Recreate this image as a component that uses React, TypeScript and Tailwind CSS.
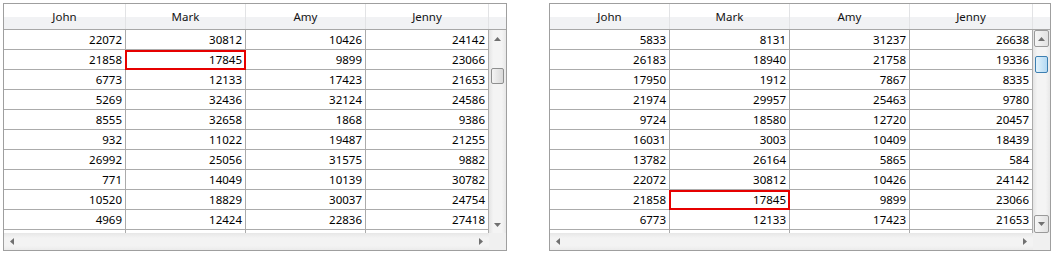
import React from 'react';

type Mark = { row: number; col: number };

const cols = ['John', 'Mark', 'Amy', 'Jenny'];

const leftRows = [
  [22072, 30812, 10426, 24142],
  [21858, 17845, 9899, 23066],
  [6773, 12133, 17423, 21653],
  [5269, 32436, 32124, 24586],
  [8555, 32658, 1868, 9386],
  [932, 11022, 19487, 21255],
  [26992, 25056, 31575, 9882],
  [771, 14049, 10139, 30782],
  [10520, 18829, 30037, 24754],
  [4969, 12424, 22836, 27418],
];

const rightRows = [
  [5833, 8131, 31237, 26638],
  [26183, 18940, 21758, 19336],
  [17950, 1912, 7867, 8335],
  [21974, 29957, 25463, 9780],
  [9724, 18580, 12720, 20457],
  [16031, 3003, 10409, 18439],
  [13782, 26164, 5865, 584],
  [22072, 30812, 10426, 24142],
  [21858, 17845, 9899, 23066],
  [6773, 12133, 17423, 21653],
];

// arrow glyphs for the scroll bars
function Arrow({ dir }: { dir: 'up' | 'down' | 'left' | 'right' }) {
  const pts = {
    up: '0,4 3.5,0 7,4',
    down: '0,0 3.5,4 7,0',
    left: '4,0 0,3.5 4,7',
    right: '0,0 4,3.5 0,7',
  }[dir];
  const w = dir === 'up' || dir === 'down' ? 7 : 4;
  const h = dir === 'up' || dir === 'down' ? 4 : 7;
  return (
    <svg width={w} height={h} viewBox={`0 0 ${w} ${h}`}>
      <polygon points={pts} fill="#707070" />
    </svg>
  );
}

function VScroll({ hot }: { hot: boolean }) {
  return (
    <div className="w-[17px] h-full flex flex-col bg-[linear-gradient(to_right,#e4e4e4,#f4f4f4_25%,#f4f4f4_75%,#e8e8e8)]">
      {hot ? (
        <div className="h-[17px] mx-px flex items-center justify-center rounded-[2px] border border-[#9a9a9a] bg-[linear-gradient(to_right,#f6f6f6,#e2e2e2)]">
          <Arrow dir="up" />
        </div>
      ) : (
        <div className="h-[17px] flex items-center justify-center">
          <Arrow dir="up" />
        </div>
      )}
      <div className="flex-1 flex flex-col">
        {hot ? (
          <div className="mt-[9px] mx-[2px] h-[17px] rounded-[2px] border border-[#3c7fb1] bg-[linear-gradient(to_right,#e3f3fc,#b4d9f3)]" />
        ) : (
          <div className="mt-[21px] mx-[2px] h-[16px] rounded-[2px] border border-[#8e8f8f] bg-[linear-gradient(to_right,#f4f4f4,#d9d9d9)]" />
        )}
      </div>
      {hot ? (
        <div className="h-[18px] mx-px flex items-center justify-center rounded-[2px] border border-[#9a9a9a] bg-[linear-gradient(to_right,#f6f6f6,#e2e2e2)]">
          <Arrow dir="down" />
        </div>
      ) : (
        <div className="h-[17px] flex items-center justify-center">
          <Arrow dir="down" />
        </div>
      )}
    </div>
  );
}

function Grid({ rows, widths, mark }: { rows: number[][]; widths: number[]; mark: Mark }) {
  const wClass = (i: number) =>
    widths[i] === 122 ? 'w-[122px]' : widths[i] === 123 ? 'w-[123px]' : 'w-[120px]';

  return (
    <div className="w-fit h-[248px] flex flex-col border border-[#9f9f9f] bg-white">
      {/* header */}
      <div className="h-[26px] flex border-b border-[#a7a7a7] bg-[linear-gradient(to_bottom,#ffffff_0%,#ffffff_52%,#f1f2f4_52%,#f1f2f4_100%)]">
        {cols.map((c, i) => (
          <div
            key={c}
            className={`${wClass(i)} h-full flex items-center justify-center border-r border-[#e2e3e5] text-[#141414]`}
          >
            {c}
          </div>
        ))}
        <div className="w-[17px]" />
      </div>

      {/* body */}
      <div className="h-[203px] flex">
        <div className="flex-1 overflow-hidden">
          {[...rows, null].map((r, ri) => (
            <div key={ri} className="h-[20px] flex border-b border-[#ababab]">
              {cols.map((_, ci) => (
                <div
                  key={ci}
                  className={`${wClass(ci)} relative h-full flex items-center justify-end pr-[3px] border-r border-[#ababab] text-black`}
                >
                  {r ? r[ci] : ''}
                  {mark.row === ri && mark.col === ci && (
                    <div className="absolute -left-px -right-px top-0 -bottom-px border-2 border-[#e60000]" />
                  )}
                </div>
              ))}
            </div>
          ))}
        </div>
        <VScroll hot={mark.row > 5} />
      </div>

      {/* horizontal scroll bar */}
      <div className="h-[17px] flex">
        <div className="flex-1 flex items-center justify-between px-[6px] bg-[linear-gradient(to_bottom,#e7e7e7,#f3f3f3_30%,#f3f3f3_75%,#ebebeb)]">
          <Arrow dir="left" />
          <Arrow dir="right" />
        </div>
        <div className="w-[17px] bg-[#f0f0f0]" />
      </div>
    </div>
  );
}

export default function App() {
  return (
    <div className="w-[1053px] h-[253px] bg-white pt-[3px] pl-[3px] flex gap-[42px] text-[11.5px] font-['Noto_Sans','DejaVu_Sans',sans-serif] leading-none">
      <Grid rows={leftRows} widths={[122, 120, 120, 123]} mark={{ row: 1, col: 1 }} />
      <Grid rows={rightRows} widths={[120, 120, 120, 123]} mark={{ row: 8, col: 1 }} />
    </div>
  );
}
